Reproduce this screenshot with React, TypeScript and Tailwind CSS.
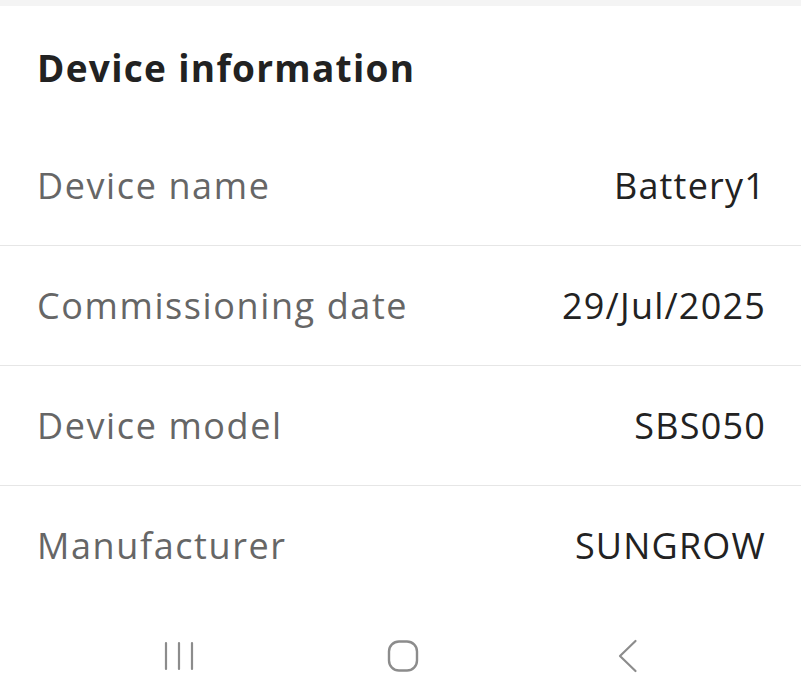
import { useState } from 'react';

const ROWS = [
  { label: 'Device name', value: 'Battery1' },
  { label: 'Commissioning date', value: '29/Jul/2025' },
  { label: 'Device model', value: 'SBS050' },
  { label: 'Manufacturer', value: 'SUNGROW' },
];

function NavBar() {
  return (
    <div className="flex flex-1 items-center justify-center pt-[6px]">
      {/* recents */}
      <svg width="32" height="30" viewBox="0 0 32 30" fill="none" stroke="#8c8c8c" strokeWidth="2.2" strokeLinecap="round">
        <path d="M3 2v26M16 2v26M29 2v26" />
      </svg>
      {/* home */}
      <svg className="ml-[192px]" width="32" height="32" viewBox="0 0 32 32" fill="none" stroke="#8c8c8c" strokeWidth="2.4">
        <rect x="2" y="1.5" width="28" height="29" rx="10" />
      </svg>
      {/* back */}
      <svg className="ml-[198px]" width="21" height="34" viewBox="0 0 21 34" fill="none" stroke="#8c8c8c" strokeWidth="2.2" strokeLinecap="round" strokeLinejoin="round">
        <path d="M18.5 2L3 17l15.5 15" />
      </svg>
    </div>
  );
}

export default function App() {
  const [rows] = useState(ROWS);

  return (
    <div className="flex h-[699px] w-[801px] flex-col bg-white font-['Open_Sans',sans-serif]">
      <div className="h-[6px] bg-[#f4f4f4]" />

      <div className="flex h-[120px] items-center px-[37px] pt-[3px]">
        <h1 className="text-[37px] font-bold tracking-[1.3px] text-[#222222]">Device information</h1>
      </div>

      {rows.map((row, i) => (
        <div
          key={row.label}
          className={`flex h-[120px] items-center justify-between pl-[37px] pr-[35px] ${
            i < rows.length - 1 ? 'border-b-[1.5px] border-[#e6e6e6]' : ''
          }`}
        >
          <span className="text-[36px] tracking-[1.6px] text-[#666666]">{row.label}</span>
          <span className="text-[36px] tracking-[1.2px] text-[#222222]">{row.value}</span>
        </div>
      ))}

      <NavBar />
    </div>
  );
}
